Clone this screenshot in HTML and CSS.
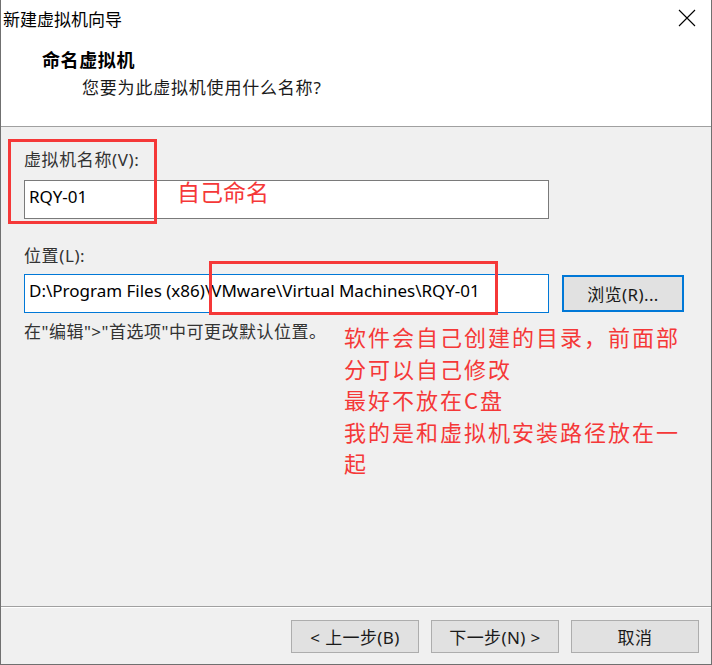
FILE: index.html
```html
<!DOCTYPE html>
<html lang="zh-CN">
<head>
    <meta charset="UTF-8">
    <title>新建虚拟机向导</title>
    <link rel="stylesheet" href="styles.css">
</head>
<body>
    <div class="window">
        <div class="header">
            <div class="title-bar">
                <span class="title">新建虚拟机向导</span>
                <svg class="close" width="18" height="18" viewBox="0 0 18 18">
                    <path d="M1 1 L17 17 M17 1 L1 17" stroke="#000" stroke-width="1.1" fill="none"/>
                </svg>
            </div>
            <div class="heading">命名虚拟机</div>
            <div class="subheading">您要为此虚拟机使用什么名称?</div>
        </div>

        <div class="content">
            <div class="label">虚拟机名称(V):</div>
            <div class="field">RQY-01</div>

            <div class="label label-location">位置(L):</div>
            <div class="row">
                <div class="field field-focus">D:\Program Files (x86)\VMware\Virtual Machines\RQY-01</div>
                <button class="btn btn-browse">浏览(R)...</button>
            </div>
            <div class="hint">在"编辑"&gt;"首选项"中可更改默认位置。</div>
        </div>

        <div class="footer">
            <button class="btn">&lt; 上一步(B)</button>
            <button class="btn">下一步(N) &gt;</button>
            <button class="btn">取消</button>
        </div>

        <!-- annotations drawn over the dialog -->
        <div class="mark mark-name"></div>
        <div class="mark mark-path"></div>
        <div class="note note-name">自己命名</div>
        <div class="note note-path">软件会自己创建的目录，前面部分可以自己修改<br>最好不放在C盘<br>我的是和虚拟机安装路径放在一起</div>
    </div>
</body>
</html>
```

FILE: styles.css
```css
html, body {
    margin: 0;
    padding: 0;
    background: #fff;
}

body {
    font-family: "Noto Sans", "Noto Sans CJK SC", sans-serif;
    color: #1a1a1a;
}

.window {
    position: relative;
    width: 712px;
    height: 665px;
    box-sizing: border-box;
    border-left: 1px solid #707070;
    border-right: 1px solid #707070;
    border-bottom: 1px solid #707070;
    display: flex;
    flex-direction: column;
    background: #f0f0f0;
    overflow: hidden;
}

.header {
    height: 126px;
    background: #fff;
    border-bottom: 1px solid #a0a0a0;
    flex-shrink: 0;
}

.title-bar {
    height: 36px;
    display: flex;
    align-items: center;
    justify-content: space-between;
    padding: 0 15px 0 2px;
}

.title {
    font-size: 17px;
    color: #000;
}

.heading {
    margin: 12px 0 0 41px;
    font-size: 18px;
    letter-spacing: 0.6px;
    line-height: 24px;
    font-weight: bold;
    color: #000;
}

.subheading {
    margin: 4px 0 0 81px;
    font-size: 17px;
    letter-spacing: 0.8px;
    line-height: 24px;
    color: #1a1a1a;
}

.content {
    flex: 1;
    padding: 21px 0 0 23px;
}

.label {
    font-size: 17px;
    letter-spacing: 0.6px;
    line-height: 24px;
    color: #333;
}

.label-location {
    margin-top: 25px;
}

.field {
    width: 525px;
    height: 39px;
    box-sizing: border-box;
    margin-top: 8px;
    padding: 0 4px;
    background: #fff;
    border: 1px solid #7a7a7a;
    font-size: 17px;
    line-height: 32px;
    color: #000;
    white-space: nowrap;
    overflow: hidden;
}

.row {
    display: flex;
    align-items: center;
    gap: 13px;
    margin-top: 6px;
}

.row .field {
    margin-top: 0;
}

.field-focus {
    border-color: #0078d7;
}

.btn {
    width: 128px;
    height: 33px;
    box-sizing: border-box;
    border: 1px solid #adadad;
    background: #e1e1e1;
    font-family: "Noto Sans", "Noto Sans CJK SC", sans-serif;
    font-size: 17px;
    letter-spacing: 0.4px;
    color: #1a1a1a;
    padding: 0;
}

.btn-browse {
    width: 122px;
    height: 37px;
    border: 2px solid #0078d7;
}

.hint {
    margin-top: 7px;
    font-size: 17px;
    letter-spacing: 0.5px;
    line-height: 24px;
    color: #333;
}

.footer {
    height: 58px;
    flex-shrink: 0;
    box-sizing: border-box;
    border-top: 1px solid #a0a0a0;
    box-shadow: inset 0 1px 0 #fff;
    display: flex;
    justify-content: flex-end;
    align-items: flex-start;
    gap: 12px;
    padding: 13px 12px 0 0;
}

.mark {
    position: absolute;
    border: 3px solid #f53838;
    box-sizing: border-box;
}

.mark-name {
    left: 7px;
    top: 139px;
    width: 149px;
    height: 85px;
}

.mark-path {
    left: 208px;
    top: 261px;
    width: 289px;
    height: 54px;
}

.note {
    position: absolute;
    color: #f53838;
    font-family: "Noto Sans CJK SC", sans-serif;
}

.note-name {
    left: 176px;
    top: 176px;
    font-size: 23px;
    line-height: 30px;
}

.note-path {
    left: 343px;
    top: 321px;
    width: 345px;
    font-size: 22px;
    letter-spacing: 2px;
    line-height: 31.6px;
}
```
